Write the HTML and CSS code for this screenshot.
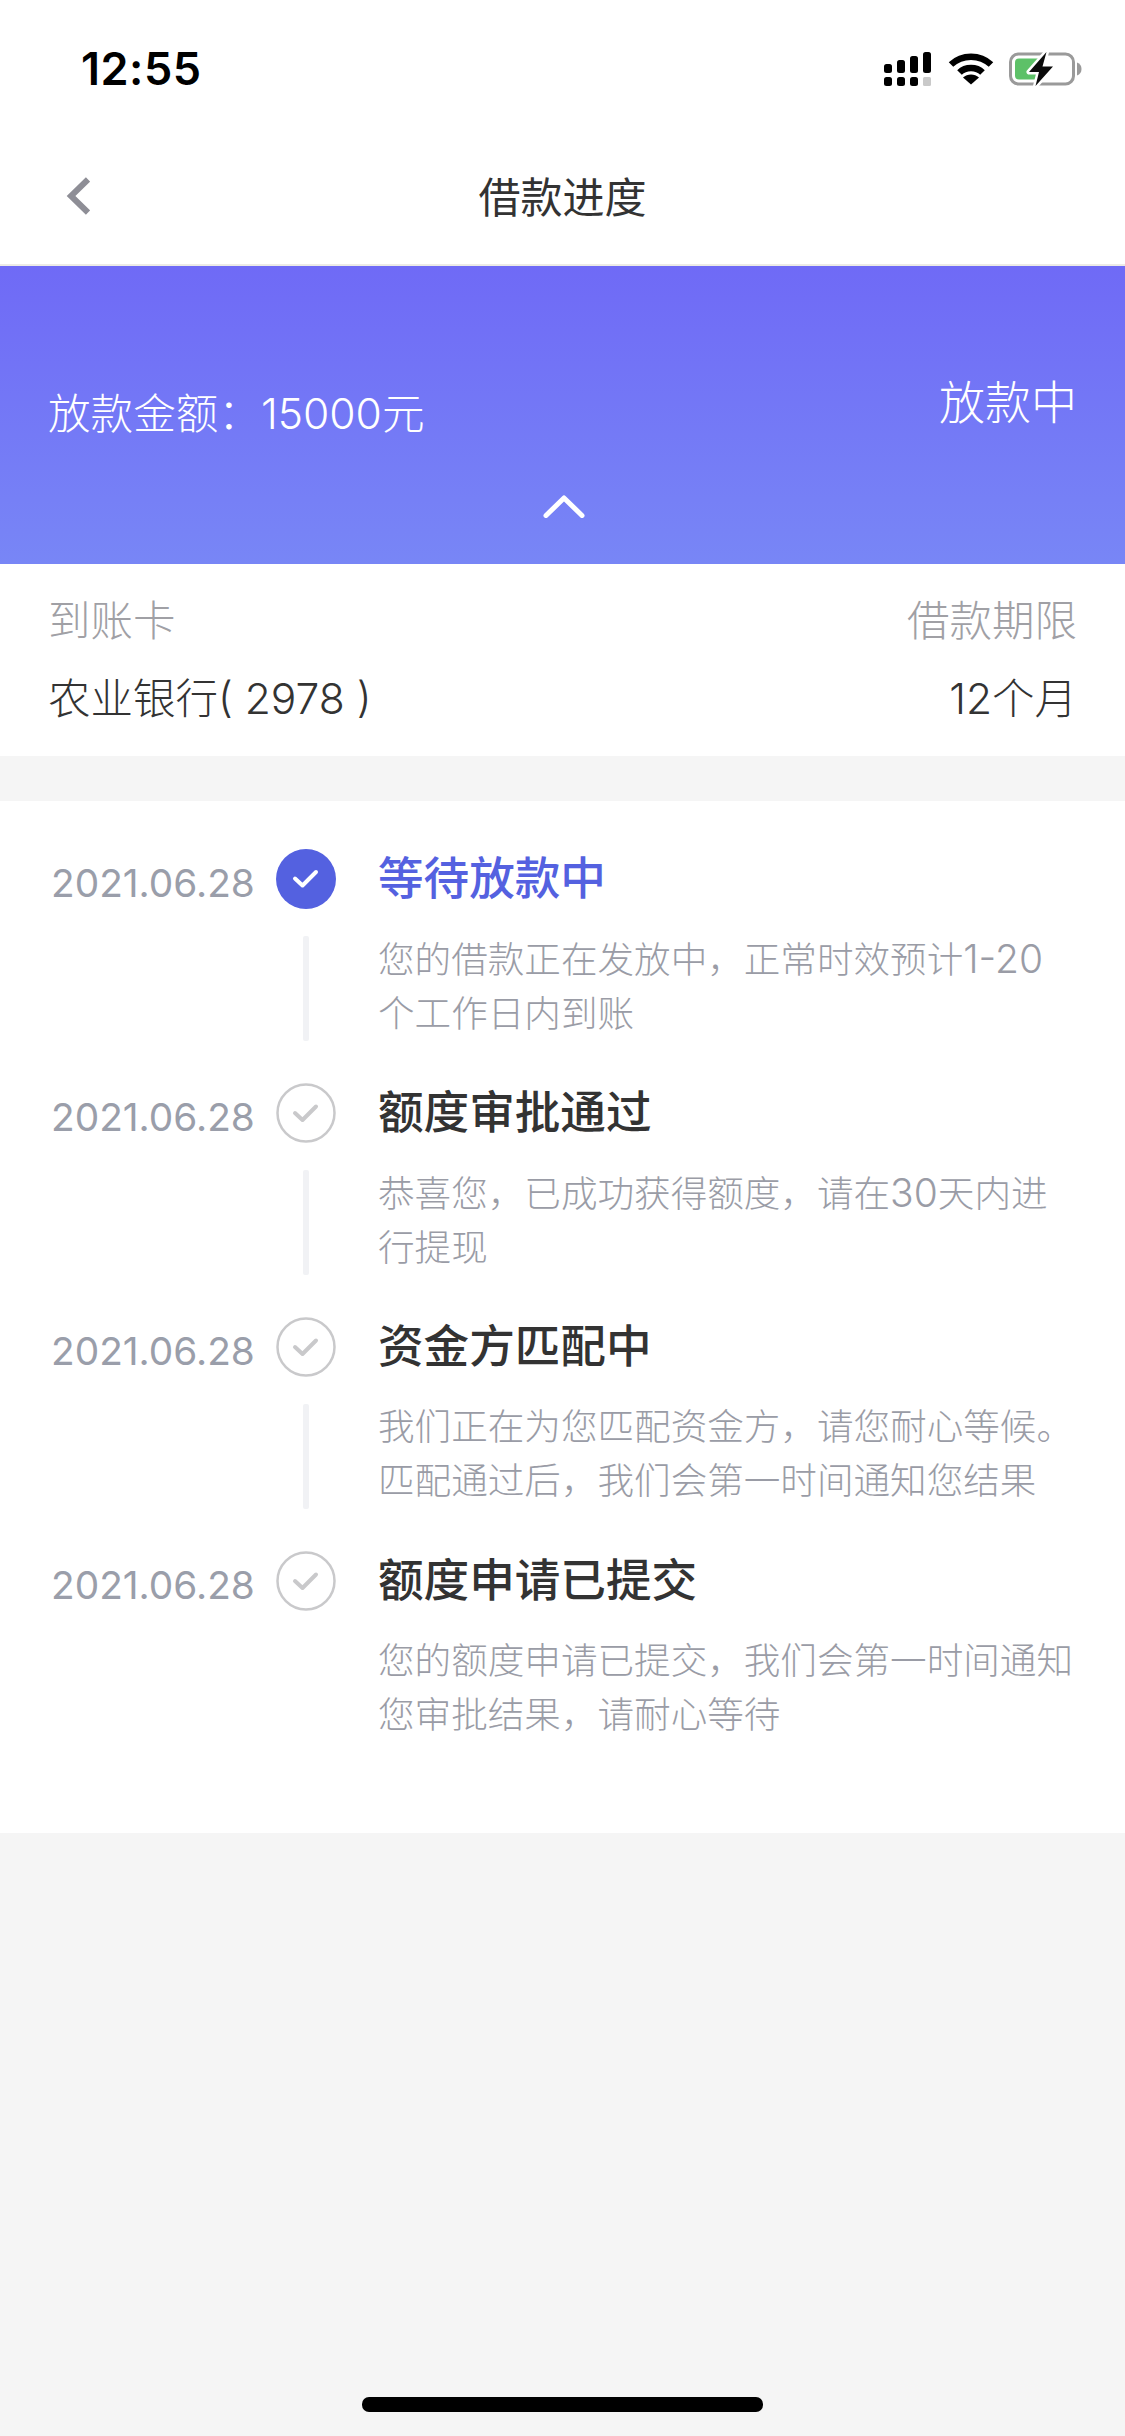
FILE: index.html
```html
<!DOCTYPE html>
<html lang="zh-CN">
<head>
<meta charset="utf-8">
<title>借款进度</title>
<link rel="stylesheet" href="styles.css">
</head>
<body>
<div class="page">
  <div class="statusbar">
    <span class="time">12:55</span>
    <div class="status-icons">
      <svg class="signal" width="48" height="36" viewBox="0 0 48 36">
        <g fill="#000">
          <rect x="0" y="12" width="8" height="9" rx="2.5"/><rect x="13" y="8" width="8" height="13" rx="2.5"/><rect x="26" y="4" width="8" height="17" rx="2.5"/><rect x="39" y="0" width="8" height="21" rx="2.5"/>
          <rect x="0" y="25" width="8" height="9" rx="2.5"/><rect x="13" y="25" width="8" height="9" rx="2.5"/><rect x="26" y="25" width="8" height="9" rx="2.5"/>
        </g>
        <rect x="39" y="25" width="8" height="9" rx="1.5" fill="#c9c9c9"/>
      </svg>
      <svg class="wifi" width="46" height="34" viewBox="0 0 46 34">
        <path d="M3 13.5C14 3 32 3 43 13.5" fill="none" stroke="#000" stroke-width="6.5"/>
        <path d="M11.5 21.5C17.5 15.5 28.5 15.5 34.5 21.5" fill="none" stroke="#000" stroke-width="6.5"/>
        <path d="M23 33.5L15 26.5C19.5 22.5 26.5 22.5 31 26.5Z" fill="#000"/>
      </svg>
      <svg class="battery" width="74" height="36" viewBox="0 0 74 36">
        <rect x="1.5" y="2" width="63" height="30" rx="8" fill="none" stroke="#9a9a9a" stroke-width="3"/>
        <path d="M68 10.500C71 11.500 72.500 14 72.500 17S71 22.500 68 23.500Z" fill="#9a9a9a"/>
        <rect x="6" y="6.500" width="27" height="21" rx="4" fill="#5dc168"/>
        <path d="M37.500 0L20 20H30L26.500 34L44 14.500H33.500Z" fill="#fff" stroke="#fff" stroke-width="5" stroke-linejoin="round"/>
        <path d="M37.500 0L20 20H30L26.500 34L44 14.500H33.500Z" fill="#0b0b0b"/>
      </svg>
    </div>
  </div>
  <header class="navbar">
    <svg class="back" width="24" height="38" viewBox="0 0 24 38"><path d="M22 2.500L5 19L22 35.500" fill="none" stroke="#8e8e96" stroke-width="6"/></svg>
    <h1 class="nav-title">借款进度</h1>
  </header>
  <section class="banner">
    <div class="banner-row">
      <span class="amount">放款金额：15000元</span>
      <span class="state">放款中</span>
    </div>
    <svg class="collapse" width="42" height="24" viewBox="0 0 42 24"><path d="M3 21.500L21 4L39 21.500" fill="none" stroke="#fff" stroke-width="5" stroke-linecap="round" stroke-linejoin="round"/></svg>
  </section>
  <section class="info">
    <div class="info-row label"><span>到账卡</span><span>借款期限</span></div>
    <div class="info-row value"><span>农业银行( 2978 )</span><span>12个月</span></div>
  </section>
  <section class="timeline">
    <div class="step active">
      <div class="date">2021.06.28</div>
      <div class="rail">
        <svg class="dot" width="60" height="60" viewBox="0 0 60 60"><circle cx="30" cy="30" r="30" fill="#5461e0"/><path d="M19 29.500L26.500 36.500L40 23" fill="none" stroke="#fff" stroke-width="4" stroke-linecap="round" stroke-linejoin="round"/></svg>
        <div class="line"></div>
      </div>
      <div class="body">
        <h2>等待放款中</h2>
        <p>您的借款正在发放中，正常时效预计<span class="num">1-20</span><br>个工作日内到账</p>
      </div>
    </div>
    <div class="step">
      <div class="date">2021.06.28</div>
      <div class="rail">
        <svg class="dot" width="60" height="60" viewBox="0 0 60 60"><circle cx="30" cy="30" r="28.500" fill="none" stroke="#c9c9cb" stroke-width="2.500"/><path d="M19 30L26.500 37L40 23.500" fill="none" stroke="#c9c9cb" stroke-width="4" stroke-linecap="round" stroke-linejoin="round"/></svg>
        <div class="line"></div>
      </div>
      <div class="body">
        <h2>额度审批通过</h2>
        <p>恭喜您，已成功获得额度，请在<span class="num">30</span>天内进<br>行提现</p>
      </div>
    </div>
    <div class="step">
      <div class="date">2021.06.28</div>
      <div class="rail">
        <svg class="dot" width="60" height="60" viewBox="0 0 60 60"><circle cx="30" cy="30" r="28.500" fill="none" stroke="#c9c9cb" stroke-width="2.500"/><path d="M19 30L26.500 37L40 23.500" fill="none" stroke="#c9c9cb" stroke-width="4" stroke-linecap="round" stroke-linejoin="round"/></svg>
        <div class="line"></div>
      </div>
      <div class="body">
        <h2>资金方匹配中</h2>
        <p>我们正在为您匹配资金方，请您耐心等候。<br>匹配通过后，我们会第一时间通知您结果</p>
      </div>
    </div>
    <div class="step">
      <div class="date">2021.06.28</div>
      <div class="rail">
        <svg class="dot" width="60" height="60" viewBox="0 0 60 60"><circle cx="30" cy="30" r="28.500" fill="none" stroke="#c9c9cb" stroke-width="2.500"/><path d="M19 30L26.500 37L40 23.500" fill="none" stroke="#c9c9cb" stroke-width="4" stroke-linecap="round" stroke-linejoin="round"/></svg>
      </div>
      <div class="body">
        <h2>额度申请已提交</h2>
        <p>您的额度申请已提交，我们会第一时间通知<br>您审批结果，请耐心等待</p>
      </div>
    </div>
  </section>
  <div class="home-indicator"></div>
</div>
</body>
</html>
```
FILE: styles.css
```css
* { box-sizing: border-box; margin: 0; padding: 0; }
html, body { width: 1125px; height: 2436px; overflow: hidden; }
body { font-family: Inter, "Noto Sans CJK SC", sans-serif; background: #f5f5f5; color: #333; }
.page { position: relative; width: 1125px; height: 2436px; display: flex; flex-direction: column; }

.statusbar { height: 132px; background: #fff; display: flex; justify-content: space-between; align-items: flex-start; padding: 44px 42px 0 81px; flex: none; }
.time { font: 600 45px/50px Inter, sans-serif; color: #000; letter-spacing: 0.5px; }
.status-icons { display: flex; align-items: flex-start; }
.signal { margin: 8px 16px 0 0; }
.wifi { margin: 7px 15px 0 0; }
.battery { margin-top: 8px; }

.navbar { height: 134px; background: #fff; border-bottom: 2px solid #ecebe6; flex: none; display: flex; align-items: center; justify-content: center; position: relative; }
.back { position: absolute; left: 66px; top: 45px; }
.nav-title { font-size: 42px; font-weight: 400; color: #333; line-height: 60px; }

.banner { height: 298px; flex: none; background: linear-gradient(180deg, #6f6af6 0%, #7886f6 100%); color: #fff; display: flex; flex-direction: column; padding: 0 48px; }
.banner-row { display: flex; justify-content: space-between; align-items: flex-start; padding-top: 106px; height: 204px; }
.amount { font-size: 42.600px; line-height: 60px; margin-top: 12px; font-weight: 300; }
.state { font-size: 46px; line-height: 60px; font-weight: 300; }
.collapse { align-self: center; margin-top: 24px; flex: none; transform: translateX(1px); }

.info { height: 192px; background: #fff; flex: none; padding: 27px 48px 0; }
.info-row { display: flex; justify-content: space-between; font-size: 42.500px; line-height: 60px; font-weight: 300; }
.info-row.label { color: #a0a0a5; }
.info-row.value { color: #333; margin-top: 18px; }

.timeline { margin-top: 45px; height: 1032px; background: #fff; flex: none; padding-top: 48px; display: flex; flex-direction: column; }
.step { display: flex; height: 234px; flex: none; }
.date { width: 276px; padding: 10px 0 0 51px; font-size: 38.800px; line-height: 48px; color: #9a9eaa; font-weight: 400; flex: none; white-space: nowrap; }
.rail { width: 102px; flex: none; display: flex; flex-direction: column; }
.dot { display: block; flex: none; }
.line { width: 6px; height: 105px; margin: 27px 0 0 27px; background: #f1f2f5; border-radius: 2px; }
.body { flex: 1; }
.body h2 { font-size: 45.600px; line-height: 60px; font-weight: 500; color: #333; }
.step.active .body h2 { color: #5461e0; }
.body p { font-size: 36.600px; line-height: 54px; color: #9a9ca6; margin-top: 23px; font-weight: 300; white-space: nowrap; }
.num { font-size: 39px; }

.home-indicator { position: absolute; left: 362px; top: 2397px; width: 401px; height: 15px; border-radius: 7px; background: #000; }
```
